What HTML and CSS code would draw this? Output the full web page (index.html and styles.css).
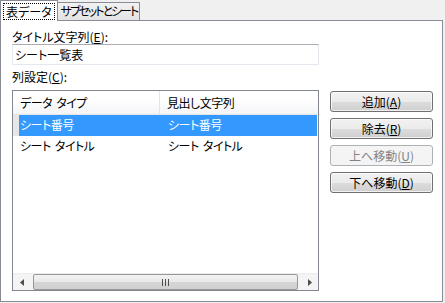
FILE: index.html
```html
<!DOCTYPE html>
<html lang="ja">
<head>
    <meta charset="UTF-8">
    <title>表データ</title>
    <link rel="stylesheet" href="styles.css">
</head>
<body>

<div class="tabs">
    <div class="tab tab-active"><span class="focus">表データ</span></div>
    <div class="tab tab-narrow">サブセットとシート</div>
</div>

<div class="panel">
    <div class="main">
        <label class="field-label" for="title">タイトル文字列(<u>E</u>):</label>
        <input id="title" class="textbox" type="text" value="シート一覧表">

        <div class="field-label list-label">列設定(<u>C</u>):</div>
        <div class="listview">
            <div class="lv-header">
                <div class="lv-col col-type">データ タイプ</div>
                <div class="lv-col col-head">見出し文字列</div>
            </div>
            <div class="lv-body">
                <div class="lv-row selected">
                    <div class="lv-cell col-type">シート番号</div>
                    <div class="lv-cell col-head">シート番号</div>
                </div>
                <div class="lv-row">
                    <div class="lv-cell col-type">シート タイトル</div>
                    <div class="lv-cell col-head">シート タイトル</div>
                </div>
            </div>
            <div class="hscroll">
                <div class="sb-arrow">
                    <svg width="4" height="7" viewBox="0 0 4 7"><path d="M4 0 L0 3.5 L4 7 Z" fill="#4d4d4d"/></svg>
                </div>
                <div class="sb-track">
                    <div class="sb-thumb">
                        <svg width="7" height="7" viewBox="0 0 7 7"><path d="M0.5 0 V7 M3.5 0 V7 M6.5 0 V7" stroke="#4d4d4d" stroke-width="1"/></svg>
                    </div>
                </div>
                <div class="sb-arrow">
                    <svg width="4" height="7" viewBox="0 0 4 7"><path d="M0 0 L4 3.5 L0 7 Z" fill="#4d4d4d"/></svg>
                </div>
            </div>
        </div>
    </div>

    <div class="buttons">
        <button class="btn">追加(<u>A</u>)</button>
        <button class="btn">除去(<u>R</u>)</button>
        <button class="btn" disabled>上へ移動(<u>U</u>)</button>
        <button class="btn">下へ移動(<u>D</u>)</button>
    </div>
</div>

</body>
</html>
```

FILE: styles.css
```css
/* Basic Reset */
* {
    margin: 0;
    padding: 0;
    box-sizing: border-box;
}

body {
    font-family: "Noto Sans CJK JP", "Noto Sans", sans-serif;
    font-size: 12px;
    line-height: 14px;
    font-feature-settings: "palt";
    color: #000;
    background-color: #f0f0f0;
    width: 445px;
    height: 303px;
    overflow: hidden;
}

input, button {
    font-feature-settings: "palt";
}

u {
    text-decoration: underline;
    text-underline-offset: 1px;
}

/* Tabs */
.tabs {
    display: flex;
    align-items: flex-end;
    height: 21px;
}

.tab {
    height: 18px;
    padding: 1px 4px 0 4px;
    border: 1px solid #898c95;
    border-bottom: none;
    background: linear-gradient(#f2f2f2, #e3e3e3);
    white-space: nowrap;
    margin-bottom: 1px;
}

.tab-narrow {
    padding: 1px 2px 0 3px;
    letter-spacing: -2px;
}

.tab-active {
    position: relative;
    z-index: 1;
    height: 21px;
    padding: 2px 2px 0 2px;
    background: #fff;
    margin-bottom: 0;
    margin-right: -1px;
}

.focus {
    display: inline-block;
    border: 1px dotted #000;
    padding: 0 2px;
    line-height: 15px;
}

/* Panel */
.panel {
    display: flex;
    width: 443px;
    height: 282px;
    margin-top: -1px;
    border: 1px solid #898c95;
    background: #fff;
    padding: 9px 0 0 11px;
}

.main {
    display: flex;
    flex-direction: column;
    width: 307px;
}

.field-label {
    display: block;
    height: 14px;
}

.list-label {
    margin-top: 5px;
    margin-bottom: 6px;
}

.textbox {
    height: 21px;
    border: 1px solid #e3e9ef;
    border-top-color: #abadb3;
    padding: 0 2px;
    font: inherit;
    line-height: 19px;
    outline: none;
}

/* List view */
.listview {
    display: flex;
    flex-direction: column;
    height: 201px;
    border: 1px solid #828790;
    letter-spacing: -0.5px;
    word-spacing: 2px;
}

.lv-header {
    display: flex;
    height: 24px;
    background: linear-gradient(#ffffff 40%, #f3f4f6);
    border-bottom: 1px solid #e5e5e5;
}

.lv-col {
    padding: 5px 0 0 7px;
}

.col-type {
    width: 147px;
}

.lv-header .col-type {
    border-right: 1px solid #e3e5e8;
}

.col-head {
    flex: 1;
}

.lv-body {
    flex: 1;
}

.lv-row {
    display: flex;
    height: 21px;
    padding-left: 6px;
}

.lv-cell {
    padding: 3px 0 0 1px;
}

.lv-row .col-type {
    width: 148px;
}

.lv-row.selected {
    background: linear-gradient(to right, #e6e6e6 6px, #3399ff 6px);
    color: #fff;
    margin-right: 1px;
}

/* Horizontal scrollbar */
.hscroll {
    display: flex;
    height: 17px;
    background: #f4f4f4;
    border-top: 1px solid #ececec;
}

.sb-arrow {
    width: 17px;
    display: flex;
    align-items: center;
    justify-content: center;
}

.sb-track {
    flex: 1;
    padding: 0 3px;
    display: flex;
}

.sb-thumb {
    flex: 1;
    display: flex;
    align-items: center;
    justify-content: center;
    border: 1px solid #979797;
    border-radius: 2px;
    background: linear-gradient(#f3f3f3, #e8e8e8 50%, #d6d6d6 51%, #d0d0d0);
}

/* Buttons */
.buttons {
    display: flex;
    flex-direction: column;
    gap: 6px;
    width: 103px;
    margin-left: 11px;
    padding-top: 61px;
}

.btn {
    height: 21px;
    font: inherit;
    color: #000;
    border: 1px solid #707070;
    border-radius: 3px;
    background: linear-gradient(#f2f2f2, #ebebeb 50%, #dddddd 51%, #cfcfcf);
    box-shadow: inset 0 0 0 1px rgba(255, 255, 255, 0.7);
}

.btn:disabled {
    color: #838383;
    border-color: #adb2b5;
    background: #f4f4f4;
    box-shadow: none;
}
```
